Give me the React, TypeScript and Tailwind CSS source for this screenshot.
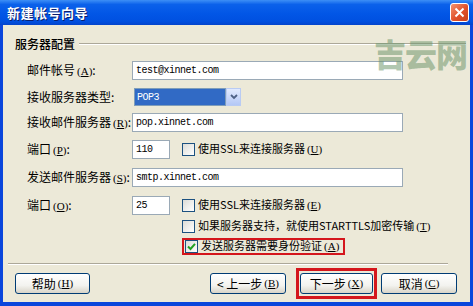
import React from 'react';

const cjk = { fontFamily: '"Noto Sans CJK SC", "Noto Sans", sans-serif' };
const mono = { fontFamily: '"Liberation Mono", "DejaVu Sans Mono", monospace' };

function Mn({ k }: { k: string }) {
  return (
    <span className="text-[11px] ml-[2px]" style={{ fontFamily: '"Liberation Serif", serif' }}>
      (<u>{k}</u>)
    </span>
  );
}

function Field({ value, w }: { value: string; w: string }) {
  return (
    <div
      className={`${w} h-[19px] bg-white border border-[#9aa9b6] flex items-center pl-[3px] text-[10px] tracking-[-0.5px] text-black`}
      style={mono}
    >
      {value}
    </div>
  );
}

function Check({ on = false }: { on?: boolean }) {
  return (
    <div className="w-[13px] h-[13px] border border-[#1c5180] bg-[linear-gradient(135deg,#dcdcd7,#ffffff)] flex items-center justify-center shrink-0">
      {on && (
        <svg width="9" height="9" viewBox="0 0 9 9">
          <path d="M1 4.5 L3.5 7 L8 1.8" stroke="#21a121" strokeWidth="2" fill="none" />
        </svg>
      )}
    </div>
  );
}

function Btn({ children, w }: { children: React.ReactNode; w: string }) {
  return (
    <div
      className={`${w} h-[21px] rounded-[3px] border border-[#003c74] bg-[linear-gradient(to_bottom,#ffffff,#f3f3ef_60%,#d8d4c8)] flex items-center justify-center text-[12px] text-black`}
    >
      {children}
    </div>
  );
}

function Row({ label, mt, children }: { label: React.ReactNode; mt: string; children: React.ReactNode }) {
  return (
    <div className={`flex items-center h-[20px] ${mt}`}>
      <div className="w-[105px] text-[12px] text-black whitespace-nowrap">{label}</div>
      {children}
    </div>
  );
}

export default function App() {
  return (
    <div className="w-[473px] h-[306px] flex flex-col bg-[#0a46dc] overflow-hidden relative" style={cjk}>
      {/* title bar */}
      <div className="h-[25px] shrink-0 flex items-center pl-[7px] pr-[4px] bg-[linear-gradient(to_bottom,#3d8ff6_0%,#0b61ea_18%,#0256e6_55%,#0050e0_85%,#0344cc_100%)]">
        <span className="text-white font-bold text-[13px] tracking-[0.5px] [text-shadow:1px_1px_0_#0a1f6e]">新建帐号向导</span>
        <div className="ml-auto w-[19px] h-[19px] rounded-[3px] border border-white bg-[linear-gradient(135deg,#f3936f,#e0502a_55%,#c8411a)] flex items-center justify-center">
          <svg width="11" height="11" viewBox="0 0 11 11">
            <path d="M1.5 1.5 L9.5 9.5 M9.5 1.5 L1.5 9.5" stroke="white" strokeWidth="2" />
          </svg>
        </div>
      </div>

      {/* body */}
      <div className="flex-1 mx-[3px] mb-[4px] bg-[#ece9d8] pt-[13px] flex flex-col relative">
        <div className="flex items-center h-[12px] pl-[12px] pr-[4px]">
          <span className="text-[12px] text-black font-medium">服务器配置</span>
          <div className="flex-1 ml-[4px] border-t border-[#aca899] border-b border-b-white" />
        </div>

        <div className="pl-[24px] flex flex-col">
          <Row label={<>邮件帐号<Mn k="A" />:</>} mt="mt-[10px]">
            <Field value="test@xinnet.com" w="w-[271px]" />
          </Row>
          <Row label="接收服务器类型:" mt="mt-[7px]">
            <div className="w-[107px] h-[18px] flex items-stretch ml-[2px]">
              <div className="flex-1 bg-[#316ac5] border border-[#7f9db9] flex items-center pl-[2px] text-white text-[10px] tracking-[-0.5px]" style={mono}>
                POP3
              </div>
              <div className="w-[15px] bg-[linear-gradient(to_bottom,#e1eafe,#b4c8f6)] border border-[#b9cbf3] flex items-center justify-center">
                <svg width="8" height="6" viewBox="0 0 8 6">
                  <path d="M1 1 L4 4 L7 1" stroke="#4d6185" strokeWidth="1.8" fill="none" />
                </svg>
              </div>
            </div>
          </Row>
          <Row label={<>接收邮件服务器<Mn k="R" />:</>} mt="mt-[5px]">
            <Field value="pop.xinnet.com" w="w-[271px]" />
          </Row>
          <Row label={<>端口<Mn k="P" />:</>} mt="mt-[7px]">
            <Field value="110" w="w-[38px]" />
            <div className="ml-[12px] flex items-center gap-[3px] text-[11px]">
              <Check />
              <span>使用SSL来连接服务器<Mn k="U" /></span>
            </div>
          </Row>
          <Row label={<>发送邮件服务器<Mn k="S" />:</>} mt="mt-[8px]">
            <Field value="smtp.xinnet.com" w="w-[271px]" />
          </Row>
          <Row label={<>端口<Mn k="O" />:</>} mt="mt-[8px]">
            <Field value="25" w="w-[38px]" />
            <div className="ml-[12px] flex items-center gap-[3px] text-[11px]">
              <Check />
              <span>使用SSL来连接服务器<Mn k="E" /></span>
            </div>
          </Row>
          <div className="flex items-center h-[20px] mt-[1px] pl-[155px] gap-[3px] text-[11px]">
            <Check />
            <span>如果服务器支持，就使用STARTTLS加密传输<Mn k="T" /></span>
          </div>
          <div className="flex items-center h-[20px] pl-[155px]">
            <div className="h-[17px] border-2 border-[#d4161c] pl-[1px] pr-[4px] flex items-center gap-[3px] text-[11px]">
              <Check on />
              <span>发送服务器需要身份验证<Mn k="A" /></span>
            </div>
          </div>
        </div>

        <div className="mt-[7px] ml-[5px] mr-[22px] border-t border-[#aca899] border-b border-b-white" />

        <div className="flex items-center h-[31px] mt-[3px] pl-[12px]">
          <Btn w="w-[75px]">帮助<Mn k="H" /></Btn>
          <div className="ml-[120px]">
            <Btn w="w-[76px]">&lt; 上一步<Mn k="B" /></Btn>
          </div>
          <div className="ml-[10px] border-[3px] border-[#d4161c] px-[1px] py-[2px]">
            <Btn w="w-[73px]">下一步<Mn k="X" /></Btn>
          </div>
          <div className="ml-[4px]">
            <Btn w="w-[76px]">取消<Mn k="C" /></Btn>
          </div>
        </div>

        {/* watermark */}
        <div className="absolute left-[371px] top-[12px] text-[32px] leading-none font-black tracking-[-1px] text-[rgba(110,150,108,0.55)] pointer-events-none">
          吉云网
        </div>
      </div>
    </div>
  );
}
